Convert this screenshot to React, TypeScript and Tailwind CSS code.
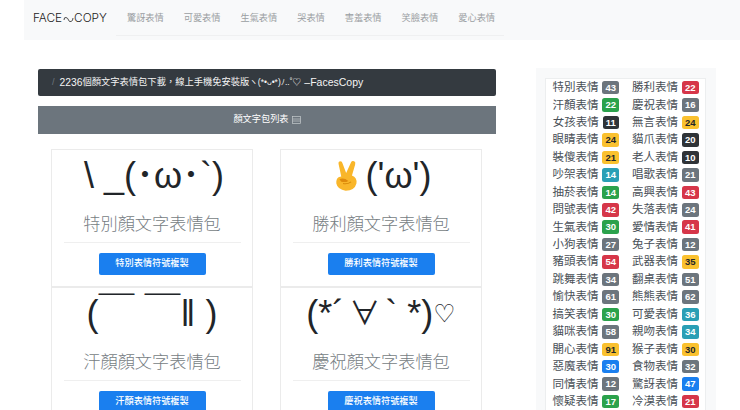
const c = {
  gray: "bg-[#6c757d] text-white",
  red: "bg-[#d63649] text-white",
  green: "bg-[#2ba24c] text-white",
  dark: "bg-[#2f3337] text-white",
  yellow: "bg-[#fac12f] text-[#212529]",
  info: "bg-[#2a9fb5] text-white",
  blue: "bg-[#1a7fef] text-white",
};
type K = keyof typeof c;
const rows: [string, string, K][] = [
  ["特別", "43", "gray"], ["勝利", "22", "red"],
  ["汗顏", "22", "green"], ["慶祝", "16", "gray"],
  ["女孩", "11", "dark"], ["無言", "24", "yellow"],
  ["眼睛", "24", "yellow"], ["貓爪", "20", "dark"],
  ["裝傻", "21", "yellow"], ["老人", "10", "dark"],
  ["吵架", "14", "info"], ["唱歌", "21", "gray"],
  ["抽菸", "14", "green"], ["高興", "43", "red"],
  ["問號", "42", "red"], ["失落", "24", "gray"],
  ["生氣", "30", "green"], ["愛情", "41", "red"],
  ["小狗", "27", "gray"], ["兔子", "12", "gray"],
  ["豬頭", "54", "red"], ["武器", "35", "yellow"],
  ["跳舞", "34", "gray"], ["翻桌", "51", "gray"],
  ["愉快", "61", "gray"], ["熊熊", "62", "gray"],
  ["搞笑", "30", "green"], ["可愛", "36", "info"],
  ["貓咪", "58", "gray"], ["親吻", "34", "info"],
  ["開心", "91", "yellow"], ["猴子", "30", "yellow"],
  ["惡魔", "30", "blue"], ["食物", "32", "gray"],
  ["同情", "12", "gray"], ["驚訝", "47", "blue"],
  ["懷疑", "17", "green"], ["冷漠", "21", "red"],
];
const nav = ["驚訝表情", "可愛表情", "生氣表情", "哭表情", "害羞表情", "笑臉表情", "愛心表情"];

function Victory() {
  return (
    <svg width="25" height="34" viewBox="0 0 28 35" className="ml-[4px] mr-[6px]">
      <path d="M7 18 L4 4 Q3.500 1 6 1 Q8 1 8.500 3.500 L12.500 14 L18 2 Q19 0 21.500 1 Q23.500 2 22.500 5 L19 17 Q25 19 24 26 Q22 34 12 34 Q3 33 1.500 26 Q1 21 4 19 Q6 18 7 18 Z" fill="#f9b62a" />
      <path d="M5 21 Q10 19 15 23 Q12 25 7 24 Z" fill="#df8a0c" />
      <path d="M9 26 Q14 27 18 24" stroke="#d98a0a" strokeWidth="1.200" fill="none" />
    </svg>
  );
}

function Card({ face, name }: { face: React.ReactNode; name: string }) {
  return (
    <div className="h-[138px] border border-[#ebebeb] flex flex-col items-center bg-white">
      <div className="h-[51px] text-[36px] leading-[49px] text-[#212529] whitespace-nowrap flex items-center">{face}</div>
      <div className="mt-[11px] text-[17.200px] leading-[24px] text-[#767d83] font-light">{name}顏文字表情包</div>
      <div className="w-[177px] mt-[6px] border-t border-[#efefef]" />
      <button className="mt-[10px] w-[107px] h-[22px] rounded-[2px] bg-[#1a7fef] text-white text-[9.200px] font-medium flex items-center justify-center">{name}表情符號複製</button>
    </div>
  );
}

export default function App() {
  return (
    <div className="w-[740px] h-[410px] overflow-hidden bg-white font-['Liberation_Sans','Noto_Sans_CJK_TC',sans-serif]">
      <header className="ml-[24px] h-[40px] bg-[#f8f9fa] flex items-start">
        <div className="ml-[9px] mt-[11px] w-[83px] flex items-center font-['Inter',sans-serif] font-light text-[11.800px] leading-[15px] text-[#222]">
          FACE
          <svg width="11" height="8" viewBox="0 0 11 8" className="mx-[0.500px] shrink-0">
            <path d="M1 5 Q1 2 3 2.500 Q5 3 5.500 5 Q6 7 8 6.500 Q10 6 10 3" stroke="#222" strokeWidth="0.800" fill="none" />
          </svg>
          COPY
        </div>
        <nav className="h-[36px] w-[388px] border-b border-[#eff0f1] flex items-center pl-[11px] gap-[20px] text-[9.200px] text-[#9a9ea2]">
          {nav.map((n) => <span key={n} className="whitespace-nowrap mt-[2px]">{n}</span>)}
        </nav>
      </header>
      <div className="flex items-start">
        <main className="ml-[38px] w-[458px]">
          <div className="mt-[29px] h-[27px] rounded-[2px] bg-[#343a40] flex items-center pl-[14px] text-[9.280px] text-[#f4f4f4] whitespace-nowrap">
            <span className="text-[#6c757d] mr-[5px]">/</span>
            <span className="text-[10.300px]">2236</span>
            個顏文字表情包下載，線上手機免安裝版
            <span className="text-[8.500px] w-[55px]">ヽ(*•ᴗ•*)ﾉ..˚♡</span>
            <span className="text-[10.500px]">–FacesCopy</span>
          </div>
          <div className="mt-[10px] h-[28px] bg-[#6c757d] flex items-center justify-center text-[9.200px] text-white">
            顏文字包列表
            <svg width="9" height="8" viewBox="0 0 9 8" className="ml-[3px]" fill="none" stroke="#c5cacd" strokeWidth="0.700">
              <rect x="0.500" y="0.500" width="8" height="7" />
              <path d="M0.500 3 H8.500 M0.500 5 H8.500" />
            </svg>
          </div>
          <div className="mt-[15px] ml-[13px] w-[431px] grid grid-cols-[202px_202px] gap-x-[27px] gap-y-0">
            <Card face={<span className="ml-[4px]">\ _(･ω･`)</span>} name="特別" />
            <Card face={<><Victory />('ω')</>} name="勝利" />
            <Card face={<>(￣ ￣‖ )</>} name="汗顏" />
            <Card face={<>(*´<span className="text-[31px] mx-[5px]">∀</span>`<span className="ml-[10px]">*)</span><span className="text-[25px] font-['DejaVu_Sans',sans-serif]">♡</span></>} name="慶祝" />
          </div>
        </main>
        <aside className="ml-[40px] mt-[28px] w-[180px] h-[342px] bg-[#f8f9fa] px-[9px] pt-[10px]">
          <div className="w-[161px] bg-white border border-[#eceeef] grid grid-cols-2 pt-0 text-[11.500px] text-[#495057]">
            {rows.map(([n, v, k]) => (
              <div key={n} className="h-[17.450px] flex items-center justify-center whitespace-nowrap">
                {n}表情
                <span className={`ml-[4px] h-[13.500px] px-[3px] rounded-[2.500px] text-[9.500px] font-bold leading-[13.500px] ${c[k]}`}>{v}</span>
              </div>
            ))}
          </div>
        </aside>
      </div>
    </div>
  );
}
